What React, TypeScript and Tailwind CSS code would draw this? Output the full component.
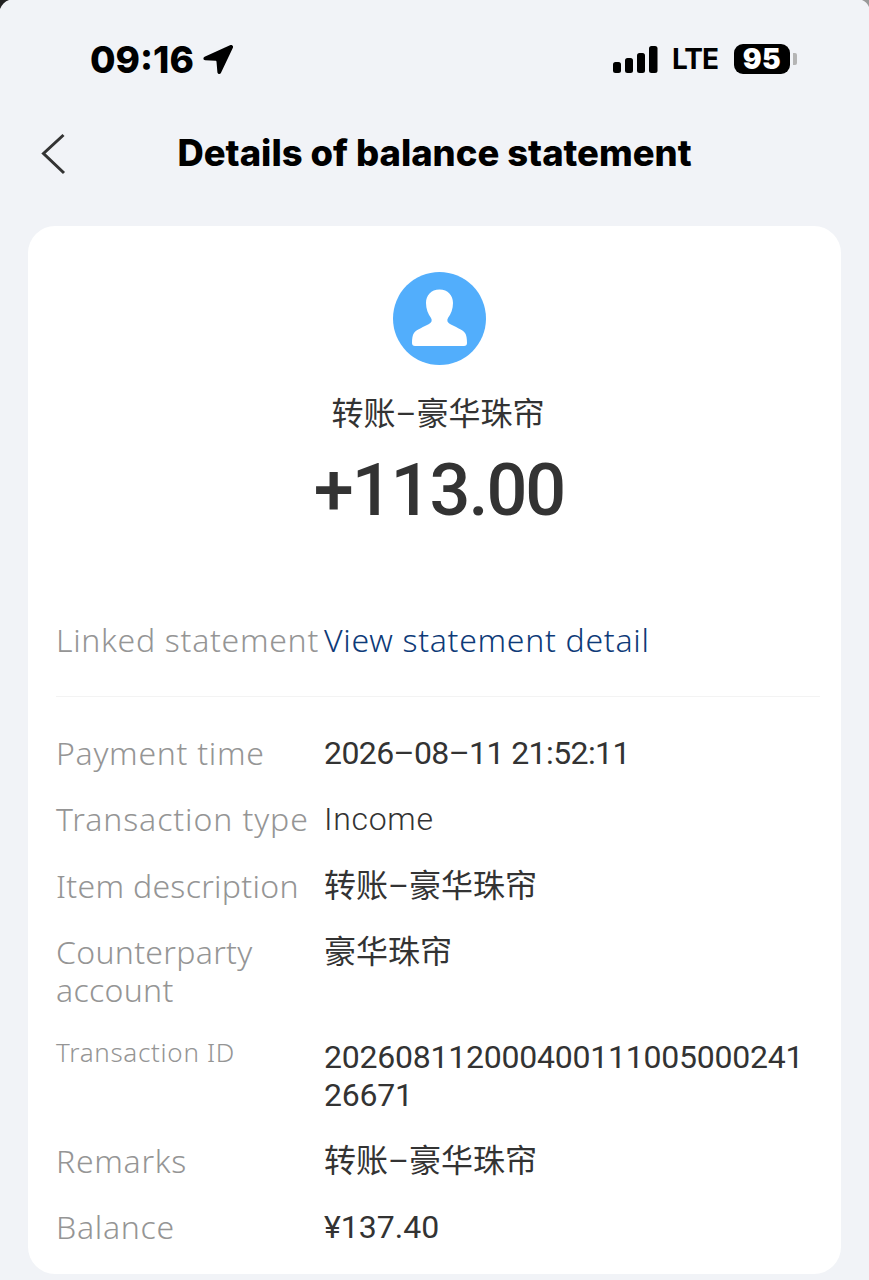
import React from "react";

const labelFont = "font-['Noto_Sans','Noto_Sans_CJK_SC',sans-serif] font-light tracking-[0.7px]";
const valueFont = "font-['Roboto','Noto_Sans_CJK_SC',sans-serif]";

function Row({ label, children, small, className = "" }: { label: React.ReactNode; children: React.ReactNode; small?: boolean; className?: string }) {
  return (
    <div className="flex items-start">
      <div className={`w-[268px] shrink-0 text-[#959595] ${labelFont} ${small ? "text-[26px] leading-[28px]" : "text-[32px] leading-[38px]"}`}>{label}</div>
      <div className={`w-[482px] text-[32px] leading-[38px] text-[#333333] ${valueFont} ${className}`}>{children}</div>
    </div>
  );
}

export default function App() {
  return (
    <div className={`relative h-[1280px] w-[869px] overflow-hidden bg-[#f1f3f7] ${valueFont}`}>
      <svg className="absolute left-0 top-0" width="12" height="12" viewBox="0 0 12 12">
        <path d="M0 0H9Q3 2 0 9Z" fill="#222" />
      </svg>
      <svg className="absolute right-0 top-0" width="10" height="10" viewBox="0 0 10 10">
        <path d="M10 0H3Q8 2 10 7Z" fill="#999" />
      </svg>

      <div className="flex h-[118px] items-center justify-between pl-[90px] pr-[72px]">
        <div className="flex items-center gap-[7px]">
          <span className="font-['Inter',sans-serif] text-[37px] font-extrabold leading-none text-black">09:16</span>
          <svg width="32" height="32" viewBox="0 0 32 32">
            <path d="M29.500 2 3.600 13.800c-1.900.9-1.400 3.400.7 3.500l10.200.5c.6 0 1 .5 1 1l.9 10.400c.2 2 2.700 2.500 3.500.7L32 4.600c.6-1.500-1-3.200-2.500-2.600Z" fill="#000" />
          </svg>
        </div>
        <div className="flex items-center">
          <svg width="45" height="28" viewBox="0 0 45 28" className="mr-[14px]">
            <rect x="0" y="17" width="8" height="11" rx="2.500" fill="#000" />
            <rect x="12" y="13" width="8" height="15" rx="2.500" fill="#000" />
            <rect x="24" y="8" width="8" height="20" rx="2.500" fill="#000" />
            <rect x="36" y="1" width="8.500" height="27" rx="2.500" fill="#000" />
          </svg>
          <span className="mr-[16px] font-['Inter',sans-serif] text-[28px] font-bold leading-none tracking-[-1px] text-black">LTE</span>
          <div className="flex h-[30px] w-[56px] items-center justify-center rounded-[9px] bg-black font-['Inter',sans-serif] text-[28px] font-black leading-none tracking-[0.5px] text-white">95</div>
          <div className="ml-[3px] h-[12px] w-[4px] rounded-r-[2px] bg-[#b5b5b5]" />
        </div>
      </div>

      <div className="relative flex h-[70px] items-center justify-center">
        <svg className="absolute left-[40px] top-[15px]" width="28" height="42" viewBox="0 0 28 42" fill="none">
          <path d="M23.500 2 3.500 20.500 24 40" stroke="#333" strokeWidth="3" />
        </svg>
        <h1 className="font-['Inter',sans-serif] text-[36.400px] font-extrabold leading-none text-black">Details of balance statement</h1>
      </div>

      <div className="mx-[28px] mt-[38px] flex h-[1048px] flex-col rounded-[27px] bg-white">
        <div className="flex flex-col items-center pl-[9px]">
          <div className="mt-[46px] h-[93px] w-[93px] rounded-full bg-[#52aefc]">
            <svg width="93" height="93" viewBox="0 0 93 93">
              <path d="M46.500 17.500C38 17.500 33 23.500 33 31C33 37 35 42 38 46C39.500 48.500 38.500 50.500 36 52C31 55 24 57 21 61C19.500 63 19 67 19 71Q19 74 22 74H71Q74 74 74 71C74 67 73.500 63 72 61C69 57 62 55 57 52C54.500 50.500 53.500 48.500 55 46C58 42 60 37 60 31C60 23.500 55 17.500 46.500 17.500Z" fill="#fff" />
            </svg>
          </div>
          <div className="mt-[27px] pr-[2px] text-[32px] leading-[44px] text-[#333333]">转账–豪华珠帘</div>
          <div className="mt-[15px] text-[72px] font-medium leading-[80px] tracking-[-2px] text-[#333333]">+113.00</div>
        </div>

        <div className="ml-[28px] mt-[90px] w-[764px]">
          <div className="flex items-start border-b border-[#f3f3f3] pb-[37px]">
            <div className={`w-[268px] shrink-0 whitespace-nowrap text-[32px] leading-[38px] text-[#959595] ${labelFont}`}>Linked statement</div>
            <div className={`text-[32px] leading-[38px] text-[#0d3a78] ${labelFont}`}>View statement detail</div>
          </div>
          <div className="mt-[37px] flex flex-col gap-[28.400px]">
            <Row label="Payment time" className="tracking-[-0.6px]">2026–08–11 21:52:11</Row>
            <Row label={<span className="tracking-[0.9px]">Transaction type</span>} className={labelFont}>Income</Row>
            <Row label={<span className="tracking-[0.3px]">Item description</span>}>转账–豪华珠帘</Row>
            <Row label={<span className="tracking-[0.3px]">Counterparty<br />account</span>}>豪华珠帘</Row>
            <Row label="Transaction ID" small className="tracking-[-0.23px]">202608112000400111005000241<br />26671</Row>
            <Row label="Remarks">转账–豪华珠帘</Row>
            <Row label="Balance">¥137.40</Row>
          </div>
        </div>
      </div>
    </div>
  );
}
